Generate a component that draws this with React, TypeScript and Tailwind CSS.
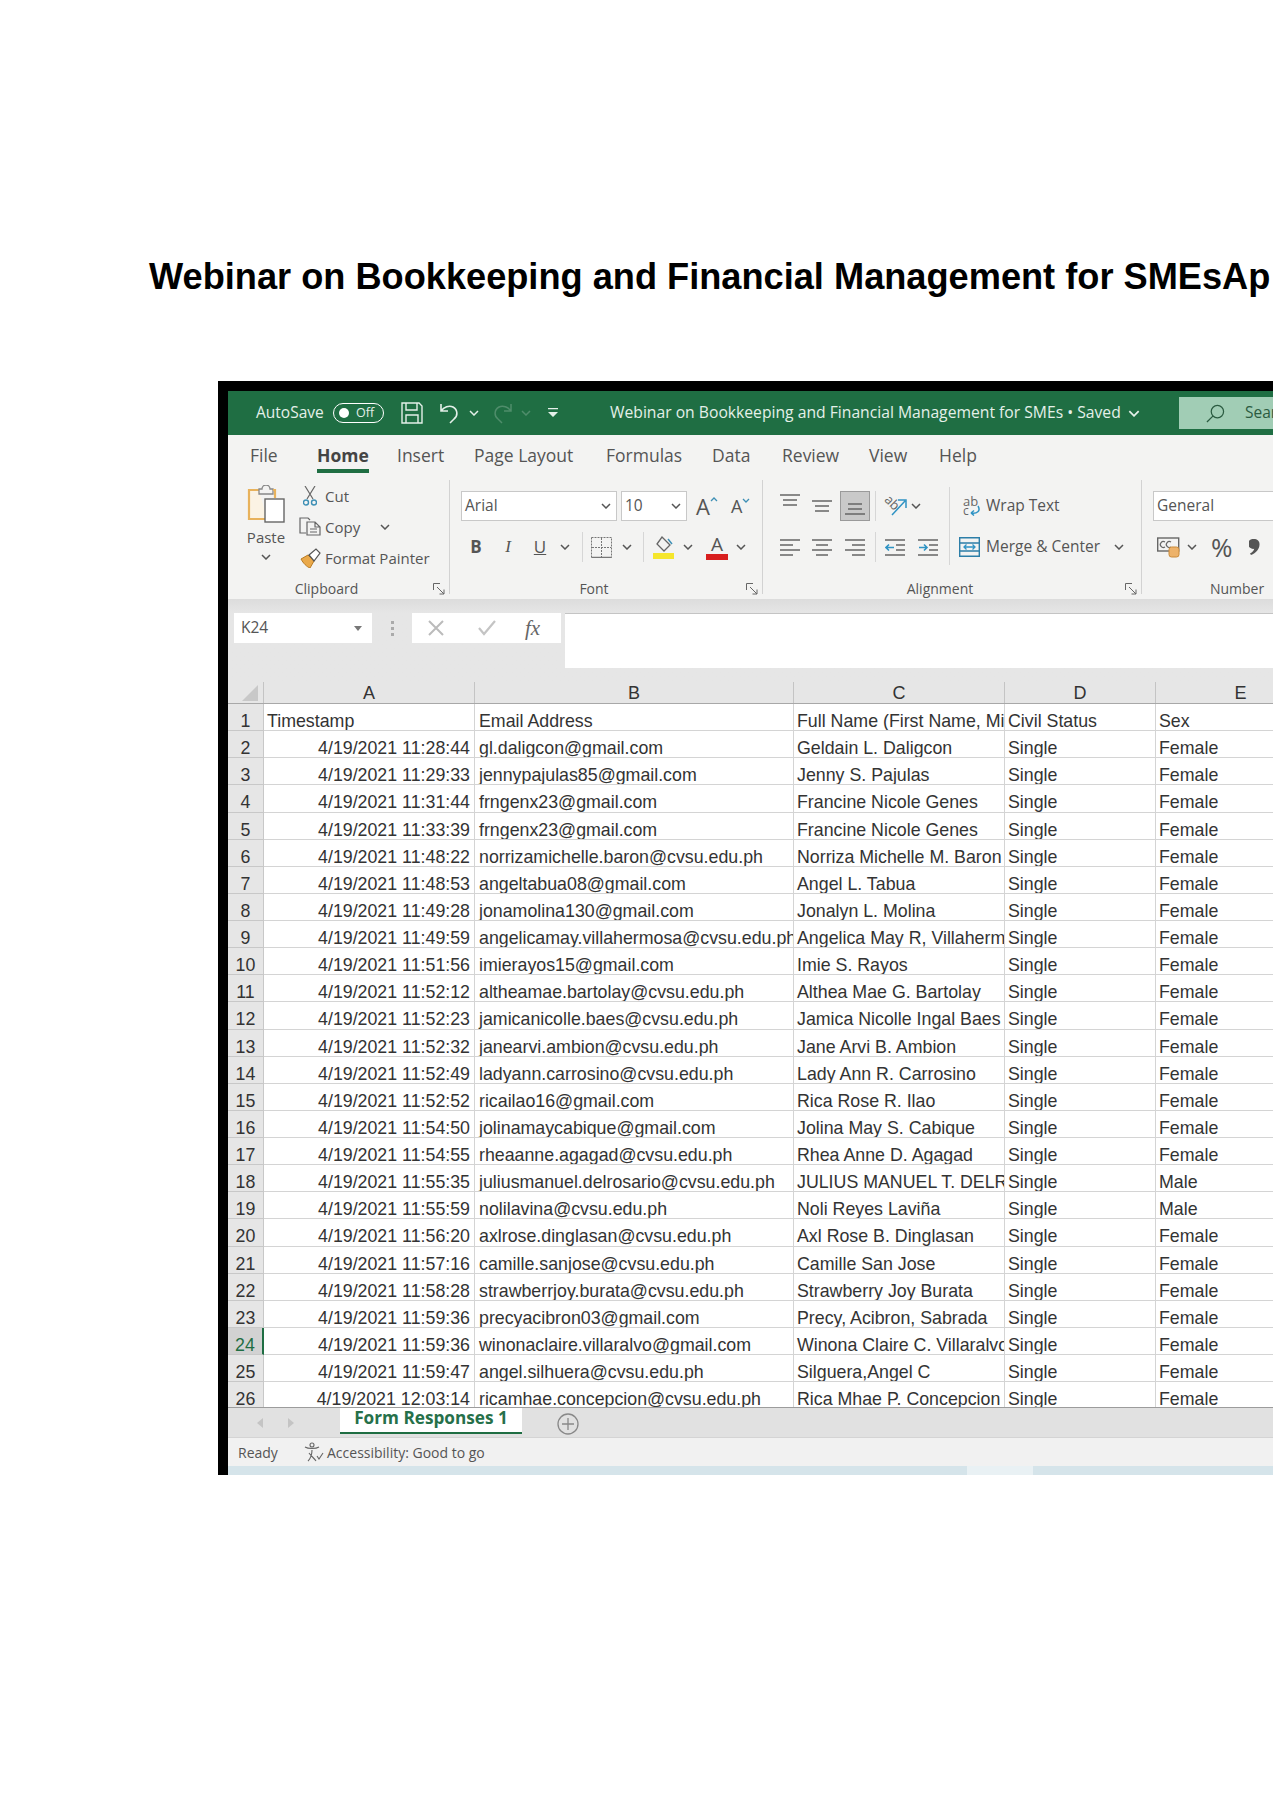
import React from 'react';

const rows = [
  ['Timestamp', 'Email Address', 'Full Name (First Name, Middle Name)', 'Civil Status', 'Sex'],
  ['4/19/2021 11:28:44', 'gl.daligcon@gmail.com', 'Geldain L. Daligcon', 'Single', 'Female'],
  ['4/19/2021 11:29:33', 'jennypajulas85@gmail.com', 'Jenny S. Pajulas', 'Single', 'Female'],
  ['4/19/2021 11:31:44', 'frngenx23@gmail.com', 'Francine Nicole Genes', 'Single', 'Female'],
  ['4/19/2021 11:33:39', 'frngenx23@gmail.com', 'Francine Nicole Genes', 'Single', 'Female'],
  ['4/19/2021 11:48:22', 'norrizamichelle.baron@cvsu.edu.ph', 'Norriza Michelle M. Baron', 'Single', 'Female'],
  ['4/19/2021 11:48:53', 'angeltabua08@gmail.com', 'Angel L. Tabua', 'Single', 'Female'],
  ['4/19/2021 11:49:28', 'jonamolina130@gmail.com', 'Jonalyn L. Molina', 'Single', 'Female'],
  ['4/19/2021 11:49:59', 'angelicamay.villahermosa@cvsu.edu.ph', 'Angelica May R, Villahermosa', 'Single', 'Female'],
  ['4/19/2021 11:51:56', 'imierayos15@gmail.com', 'Imie S. Rayos', 'Single', 'Female'],
  ['4/19/2021 11:52:12', 'altheamae.bartolay@cvsu.edu.ph', 'Althea Mae G. Bartolay', 'Single', 'Female'],
  ['4/19/2021 11:52:23', 'jamicanicolle.baes@cvsu.edu.ph', 'Jamica Nicolle Ingal Baes', 'Single', 'Female'],
  ['4/19/2021 11:52:32', 'janearvi.ambion@cvsu.edu.ph', 'Jane Arvi B. Ambion', 'Single', 'Female'],
  ['4/19/2021 11:52:49', 'ladyann.carrosino@cvsu.edu.ph', 'Lady Ann R. Carrosino', 'Single', 'Female'],
  ['4/19/2021 11:52:52', 'ricailao16@gmail.com', 'Rica Rose R. Ilao', 'Single', 'Female'],
  ['4/19/2021 11:54:50', 'jolinamaycabique@gmail.com', 'Jolina May S. Cabique', 'Single', 'Female'],
  ['4/19/2021 11:54:55', 'rheaanne.agagad@cvsu.edu.ph', 'Rhea Anne D. Agagad', 'Single', 'Female'],
  ['4/19/2021 11:55:35', 'juliusmanuel.delrosario@cvsu.edu.ph', 'JULIUS MANUEL T. DELROSARIO', 'Single', 'Male'],
  ['4/19/2021 11:55:59', 'nolilavina@cvsu.edu.ph', 'Noli Reyes Laviña', 'Single', 'Male'],
  ['4/19/2021 11:56:20', 'axlrose.dinglasan@cvsu.edu.ph', 'Axl Rose B. Dinglasan', 'Single', 'Female'],
  ['4/19/2021 11:57:16', 'camille.sanjose@cvsu.edu.ph', 'Camille San Jose', 'Single', 'Female'],
  ['4/19/2021 11:58:28', 'strawberrjoy.burata@cvsu.edu.ph', 'Strawberry Joy Burata', 'Single', 'Female'],
  ['4/19/2021 11:59:36', 'precyacibron03@gmail.com', 'Precy, Acibron, Sabrada', 'Single', 'Female'],
  ['4/19/2021 11:59:36', 'winonaclaire.villaralvo@gmail.com', 'Winona Claire C. Villaralvo', 'Single', 'Female'],
  ['4/19/2021 11:59:47', 'angel.silhuera@cvsu.edu.ph', 'Silguera,Angel C', 'Single', 'Female'],
  ['4/19/2021 12:03:14', 'ricamhae.concepcion@cvsu.edu.ph', 'Rica Mhae P. Concepcion', 'Single', 'Female'],
];

const tabs = [
  { name: 'File', width: 'w-[67px]' },
  { name: 'Home', width: 'w-[80px]' },
  { name: 'Insert', width: 'w-[77px]' },
  { name: 'Page Layout', width: 'w-[132px]' },
  { name: 'Formulas', width: 'w-[106px]' },
  { name: 'Data', width: 'w-[70px]' },
  { name: 'Review', width: 'w-[87px]' },
  { name: 'View', width: 'w-[70px]' },
  { name: 'Help', width: 'w-[60px]' },
];

const Chev = ({ className = '', color = '#555' }: { className?: string; color?: string }) => (
  <svg viewBox="0 0 10 6" className={`h-[6px] w-[10px] shrink-0 ${className}`} fill="none" stroke={color} strokeWidth="1.5">
    <path d="M1 1l4 4 4-4" />
  </svg>
);

// four horizontal strokes, used by all the align buttons
const Lines = ({ d, className = '' }: { d: string; className?: string }) => (
  <svg viewBox="0 0 20 20" className={`h-[20px] w-[20px] shrink-0 ${className}`} fill="none" stroke="#666" strokeWidth="1.6">
    <path d={d} />
  </svg>
);

const Launcher = () => (
  <svg viewBox="0 0 12 12" className="absolute right-[4px] bottom-[-1px] h-[12px] w-[12px]" fill="none" stroke="#666" strokeWidth="1">
    <path d="M.5 7V.5H7M4 4l7 7M11 6.5V11H6.500" />
  </svg>
);

const Sep = ({ className = '' }: { className?: string }) => <div className={`h-[30px] w-px shrink-0 bg-[#d6d6d6] ${className}`} />;

function GroupLabel({ children }: { children: React.ReactNode }) {
  return <div className="h-[28px] pt-[13px] pr-[24px] text-center text-[14px] leading-[20px] text-[#555]">{children}</div>;
}

function TitleBar() {
  return (
    <div className="flex h-[44px] items-center bg-[#1f6e43] text-[#e4f0e9]">
      <span className="ml-[28px] w-[77px] whitespace-nowrap text-[15.5px]">AutoSave</span>
      <div className="flex h-[20px] w-[51px] shrink-0 items-center rounded-full border-[1.5px] border-white pl-[5px]">
        <div className="h-[10px] w-[10px] rounded-full bg-white" />
        <span className="ml-[7px] text-[12.5px] leading-none">Off</span>
      </div>
      <svg viewBox="0 0 22 22" className="ml-[17px] h-[22px] w-[22px] shrink-0" fill="none" stroke="#e4f0e9" strokeWidth="1.4">
        <path d="M1 1h17l3 3v17H1zM5 1v7h11V1M5 21v-8h12v8" />
      </svg>
      <svg viewBox="0 0 20 22" className="ml-[17px] h-[22px] w-[20px] shrink-0" fill="none" stroke="#e4f0e9" strokeWidth="1.6">
        <path d="M1 2v7h7M1 9c3-4 8-6 12-4 5 3 5 9 1 12l-4 4" />
      </svg>
      <Chev className="ml-[9px]" color="#e4f0e9" />
      <svg viewBox="0 0 20 22" className="ml-[13px] h-[22px] w-[20px] shrink-0" fill="none" stroke="#4f8d6b" strokeWidth="1.5">
        <path d="M19 2v7h-7M19 9c-3-4-8-6-12-4-5 3-5 9-1 12l4 4" />
      </svg>
      <Chev className="ml-[9px]" color="#4f8d6b" />
      <svg viewBox="0 0 10 10" className="ml-[17px] h-[10px] w-[10px] shrink-0" fill="#e4f0e9">
        <path d="M0 0h10v1.300H0zM0 4h10L5 9z" />
      </svg>
      <span className="ml-[52px] w-[512px] whitespace-nowrap text-[15.7px]">Webinar on Bookkeeping and Financial Management for SMEs • Saved</span>
      <Chev className="ml-[6px] h-[7px] w-[12px]" color="#e4f0e9" />
      <div className="ml-[39px] flex h-[32px] w-[120px] shrink-0 items-center bg-[#a1cdb5] pl-[27px] text-[#2b5b41]">
        <svg viewBox="0 0 20 20" className="h-[19px] w-[19px] shrink-0" fill="none" stroke="#2b5b41" strokeWidth="1.3">
          <circle cx="12" cy="8" r="6.500" />
          <path d="M7.500 12.500L1 19" />
        </svg>
        <span className="ml-[20px] text-[15.5px]">Search</span>
      </div>
    </div>
  );
}

function RibbonTabs() {
  return (
    <div className="flex h-[38px] items-center bg-[#f3f3f2] pt-[2px] pl-[22px] text-[17.5px] text-[#555]">
      {tabs.map((t) => (
        <div key={t.name} className={`${t.width} shrink-0 whitespace-nowrap`}>
          {t.name === 'Home' ? (
            <span className="inline-block h-[36px] border-b-[4px] border-[#1f6e43] pt-[6px] leading-[24px] font-bold text-[#444]">Home</span>
          ) : (
            t.name
          )}
        </div>
      ))}
    </div>
  );
}

function Clipboard() {
  return (
    <div className="relative h-[114px] w-[222px] shrink-0 border-r border-[#d2d2d2]">
      <div className="flex h-[86px]">
        <div className="ml-[19px] flex w-[38px] shrink-0 flex-col items-center pt-[5px]">
          <svg viewBox="0 0 38 38" className="h-[38px] w-[38px] shrink-0" fill="none">
            <path d="M12 5H2v29h18" stroke="#e8b25c" strokeWidth="2.200" fill="#fbf3e4" />
            <path d="M12 6V4h3a4 4 0 018 0h3v5H12z" stroke="#888" strokeWidth="1.300" fill="#f3f3f2" />
            <path d="M26 5h2v8" stroke="#e8b25c" strokeWidth="2.200" />
            <rect x="18" y="14" width="19" height="23" fill="#fff" stroke="#666" strokeWidth="1.400" />
          </svg>
          <span className="mt-[4px] text-[15px] leading-[20px] text-[#555]">Paste</span>
          <Chev className="mt-[7px]" />
        </div>
        <div className="ml-[13px] flex flex-col text-[15px] leading-[20px] text-[#555]">
          <div className="flex h-[31px] shrink-0 items-center pl-[5px]">
            <svg viewBox="0 0 14 20" className="h-[20px] w-[14px] shrink-0" fill="none">
              <path d="M2 0l8 13M12 0L4 13" stroke="#666" strokeWidth="1.200" />
              <circle cx="3" cy="16.500" r="2.500" stroke="#3d8fb5" strokeWidth="1.400" />
              <circle cx="11" cy="16.500" r="2.500" stroke="#3d8fb5" strokeWidth="1.400" />
            </svg>
            <span className="ml-[8px]">Cut</span>
          </div>
          <div className="flex h-[31px] shrink-0 items-center pl-[1px]">
            <svg viewBox="0 0 22 19" className="h-[19px] w-[22px] shrink-0" fill="none" stroke="#666" strokeWidth="1.200">
              <path d="M7 16H1V1h8l2 2" />
              <path d="M8 5h8l5 5v8H8zM16 5v5h5M11 12h7M11 15h7" />
            </svg>
            <span className="ml-[4px]">Copy</span>
            <Chev className="ml-[20px]" />
          </div>
          <div className="flex h-[31px] shrink-0 items-center pl-[2px]">
            <svg viewBox="0 0 21 20" className="h-[20px] w-[21px] shrink-0">
              <path d="M1 11l7-4 6 6-4 7c-3-1-7-5-9-9z" fill="#eaa94a" stroke="#b87a22" strokeWidth="1" />
              <path d="M9 7l7-6 4 4-6 8z" fill="#fff" stroke="#555" strokeWidth="1.200" />
            </svg>
            <span className="ml-[4px] whitespace-nowrap">Format Painter</span>
          </div>
        </div>
      </div>
      <GroupLabel>Clipboard</GroupLabel>
      <Launcher />
    </div>
  );
}

function FontGroup() {
  return (
    <div className="relative h-[114px] w-[313px] shrink-0 border-r border-[#d2d2d2]">
      <div className="h-[86px] pt-[11px]">
        <div className="flex h-[30px] items-center">
          <div className="ml-[11px] flex h-[30px] w-[156px] items-center justify-between border border-[#c8c8c8] bg-white pr-[5px] pl-[3px] text-[15.5px] text-[#555]">
            Arial
            <Chev />
          </div>
          <div className="ml-[4px] flex h-[30px] w-[66px] items-center justify-between border border-[#c8c8c8] bg-white pr-[5px] pl-[3px] text-[15.5px] text-[#555]">
            10
            <Chev />
          </div>
          <span className="ml-[9px] flex w-[26px] items-start text-[22px] leading-none text-[#555]">A<svg viewBox="0 0 8 5" className="mt-[2px] h-[5px] w-[8px]" fill="none" stroke="#3d8fb5" strokeWidth="1.300"><path d="M1 4l3-3 3 3" /></svg></span>
          <span className="ml-[9px] flex items-start text-[18px] leading-none text-[#555]">A<svg viewBox="0 0 8 5" className="mt-[1px] h-[5px] w-[8px]" fill="none" stroke="#3d8fb5" strokeWidth="1.300"><path d="M1 1l3 3 3-3" /></svg></span>
        </div>
        <div className="mt-[11px] flex h-[30px] items-center text-[#555]">
          <span className="ml-[18px] w-[16px] text-center text-[17px] font-bold">B</span>
          <span className="ml-[16px] w-[16px] text-center font-['Liberation_Serif',serif] text-[17px] italic">I</span>
          <span className="ml-[16px] w-[16px] text-center text-[17px] underline">U</span>
          <Chev className="ml-[12px]" />
          <Sep className="ml-[12px]" />
          <svg viewBox="0 0 21 21" className="ml-[8px] h-[21px] w-[21px] shrink-0" fill="none" stroke="#777" strokeWidth="1">
            <path d="M.5.500h20v20H.500z" strokeDasharray="2 1" />
            <path d="M10.500 1v19M1 10.500h19" strokeDasharray="2 1" />
            <path d="M.5 20.500h20" strokeWidth="1.500" strokeDasharray="none" />
          </svg>
          <Chev className="ml-[10px]" />
          <Sep className="ml-[11px]" />
          <svg viewBox="0 0 21 23" className="ml-[9px] h-[23px] w-[21px] shrink-0" fill="none">
            <path d="M9 1l8 8-6 6-7-7z" stroke="#666" strokeWidth="1.300" />
            <path d="M15 3l4 5" stroke="#3d8fb5" strokeWidth="1.500" />
            <rect x="0" y="17" width="21" height="6" fill="#f5e62c" />
          </svg>
          <Chev className="ml-[9px]" />
          <div className="ml-[13px] flex h-[25px] w-[22px] shrink-0 flex-col items-center">
            <span className="text-[19px] leading-[19px] text-[#555]">A</span>
            <div className="h-[6px] w-[22px] bg-[#d81e1e]" />
          </div>
          <Chev className="ml-[8px]" />
        </div>
      </div>
      <GroupLabel>Font</GroupLabel>
      <Launcher />
    </div>
  );
}

const lineTop = 'M0 3h20M3 8h14M3 13h14';
const lineMid = 'M0 5h20M3 10h14M3 15h14';
const lineBot = 'M3 8h14M3 13h14M0 18h20';
const lineLeft = 'M0 3h20M0 8h13M0 13h20M0 18h13';
const lineCenter = 'M0 3h20M4 8h12M0 13h20M4 18h12';
const lineRight = 'M0 3h20M7 8h13M0 13h20M7 18h13';

const Indent = ({ flip, className = '' }: { flip?: boolean; className?: string }) => (
  <svg viewBox="0 0 20 20" className={`h-[20px] w-[20px] shrink-0 ${className}`} fill="none" strokeWidth="1.600">
    <path d="M0 3h20M11 8h9M11 13h9M0 18h20" stroke="#666" />
    <path d={flip ? 'M1 10.500h8M6 7.500l3 3-3 3' : 'M9 10.500H1M4 7.500l-3 3 3 3'} stroke="#2f93c4" />
  </svg>
);

function Alignment() {
  return (
    <div className="relative h-[114px] w-[379px] shrink-0 border-r border-[#d2d2d2]">
      <div className="flex h-[86px]">
        <div className="w-[186px] shrink-0 pt-[11px]">
          <div className="flex h-[30px] items-center">
            <Lines d={lineTop} className="mb-[8px] ml-[17px]" />
            <Lines d={lineMid} className="ml-[12px]" />
            <div className="ml-[8px] flex h-[30px] w-[30px] shrink-0 items-center justify-center border border-[#9a9a9a] bg-[#c9c9c9]">
              <Lines d={lineBot} />
            </div>
            <Sep className="ml-[5px]" />
            <svg viewBox="0 0 23 20" className="ml-[8px] h-[20px] w-[23px] shrink-0" fill="none">
              <text x="-1" y="10" transform="rotate(45 6 8)" fontSize="13" fill="#666">ab</text>
              <path d="M8 19L21 5M14 4h8v8" stroke="#2f93c4" strokeWidth="1.500" />
            </svg>
            <Chev className="ml-[4px]" />
          </div>
          <div className="mt-[11px] flex h-[30px] items-center">
            <Lines d={lineLeft} className="ml-[17px]" />
            <Lines d={lineCenter} className="ml-[12px]" />
            <Lines d={lineRight} className="ml-[13px]" />
            <Sep className="ml-[10px]" />
            <Indent className="ml-[9px]" />
            <Indent flip className="ml-[13px]" />
          </div>
        </div>
        <div className="mt-[7px] h-[78px] w-px shrink-0 bg-[#d6d6d6]" />
        <div className="pt-[11px] text-[15.5px] text-[#555]">
          <div className="flex h-[30px] items-center">
            <svg viewBox="0 0 19 20" className="ml-[12px] h-[20px] w-[19px] shrink-0" fill="none">
              <text x="1" y="10" fontSize="13" fill="#666">ab</text>
              <text x="1" y="19" fontSize="12" fill="#666">c</text>
              <path d="M16 10c3 5-1 8-7 7M9 17l3-2.500M9 17l3 2.500" stroke="#2f93c4" strokeWidth="1.500" />
            </svg>
            <span className="ml-[5px] whitespace-nowrap">Wrap Text</span>
          </div>
          <div className="mt-[11px] flex h-[30px] items-center">
            <svg viewBox="0 0 21 20" className="ml-[9px] h-[20px] w-[21px] shrink-0" fill="none">
              <path d="M.7.700h19.600v18.600H.7zM.7 6h19.600M.7 14h19.600" stroke="#2c7ea8" strokeWidth="1.400" />
              <path d="M5 10h11M7.500 7.500L5 10l2.500 2.500M13.500 7.500L16 10l-2.500 2.500" stroke="#2f93c4" strokeWidth="1.300" />
            </svg>
            <span className="ml-[6px] w-[125px] whitespace-nowrap">Merge &amp; Center</span>
            <Chev className="ml-[3px]" />
          </div>
        </div>
      </div>
      <GroupLabel>Alignment</GroupLabel>
      <Launcher />
    </div>
  );
}

function NumberGroup() {
  return (
    <div className="relative h-[114px] w-[200px] shrink-0">
      <div className="h-[86px] pt-[11px]">
        <div className="ml-[11px] flex h-[30px] items-center border border-[#c8c8c8] bg-white pl-[3px] text-[15.5px] text-[#555]">General</div>
        <div className="mt-[11px] flex h-[30px] items-center">
          <svg viewBox="0 0 23 22" className="ml-[15px] h-[22px] w-[23px] shrink-0" fill="none">
            <rect x=".7" y="2" width="21" height="13" stroke="#666" strokeWidth="1.400" />
            <path d="M8 6a3 3 0 100 5M14 6a3 3 0 100 5" stroke="#666" strokeWidth="1.200" />
            <rect x="12" y="11" width="10" height="10" rx="2.500" fill="#edb26a" stroke="#c98a3a" />
          </svg>
          <Chev className="ml-[7px]" />
          <span className="ml-[14px] w-[21px] text-center text-[26px] leading-none text-[#555]">%</span>
          <svg viewBox="0 0 11 16" className="ml-[17px] h-[16px] w-[11px] shrink-0" fill="#555">
            <path d="M5 0a5 5 0 015.500 5.500C10.500 10 7 14 2 16l-1-1.500c2.500-1.200 4-3 4.200-4.700A5 5 0 115 0z" />
          </svg>
        </div>
      </div>
      <div className="w-[147px] pl-[67px]">
        <GroupLabel>Number</GroupLabel>
      </div>
    </div>
  );
}

function FormulaBar() {
  return (
    <div className="flex h-[83px] items-start bg-gradient-to-b from-[#dcdcdc] to-[#e6e6e6] to-[14px] pt-[14px]">
      <div className="ml-[6px] flex h-[30px] w-[138px] shrink-0 items-center justify-between bg-white pr-[10px] pl-[7px] text-[15.5px] text-[#555]">
        K24
        <svg viewBox="0 0 8 5" className="h-[5px] w-[8px]" fill="#777"><path d="M0 0h8L4 5z" /></svg>
      </div>
      <div className="ml-[18px] flex h-[30px] w-[4px] shrink-0 flex-col items-center justify-center gap-[3px]">
        <div className="h-[3px] w-[3px] bg-[#aaa]" />
        <div className="h-[3px] w-[3px] bg-[#aaa]" />
        <div className="h-[3px] w-[3px] bg-[#aaa]" />
      </div>
      <div className="ml-[18px] flex h-[30px] w-[149px] shrink-0 items-center bg-white">
        <svg viewBox="0 0 16 16" className="ml-[16px] h-[16px] w-[16px]" fill="none" stroke="#bbb" strokeWidth="2"><path d="M1 1l14 14M15 1L1 15" /></svg>
        <svg viewBox="0 0 18 16" className="ml-[34px] h-[16px] w-[18px]" fill="none" stroke="#c4c4c4" strokeWidth="2.200"><path d="M1 8l5 6L17 1" /></svg>
        <span className="ml-[29px] font-['Liberation_Serif',serif] text-[21px] leading-none text-[#666] italic">fx</span>
      </div>
      <div className="ml-[4px] h-[55px] flex-1 border-t border-[#c4c4c4] bg-white" />
    </div>
  );
}

function ColumnHeaders() {
  const cols = [
    { label: 'A', width: 'w-[211px]' },
    { label: 'B', width: 'w-[319px]' },
    { label: 'C', width: 'w-[211px]' },
    { label: 'D', width: 'w-[151px]' },
    { label: 'E', width: 'w-[170px]' },
  ];
  return (
    <div className="flex h-[22px] border-b border-[#a8a8a8] bg-[#e6e6e6] font-['Liberation_Sans',Arial,sans-serif] text-[18px] leading-[22px] text-[#333]">
      <div className="flex w-[36px] shrink-0 items-end justify-end border-r border-[#c4c4c4] pr-[5px] pb-[2px]">
        <svg viewBox="0 0 16 16" className="h-[16px] w-[16px]" fill="#c8c8c8"><path d="M16 0v16H0z" /></svg>
      </div>
      {cols.map((c) => (
        <div key={c.label} className={`${c.width} shrink-0 border-r border-[#c4c4c4] text-center`}>{c.label}</div>
      ))}
    </div>
  );
}

function Sheet() {
  return (
    <div className="h-[703px] overflow-hidden bg-white font-['Liberation_Sans',Arial,sans-serif] text-[17.8px] text-[#333]">
      {rows.map((row, i) => {
        const active = i === 23;
        return (
          <div key={i} className="flex h-[27.14px] leading-[26px]">
            <div className={`w-[36px] shrink-0 overflow-hidden border-r border-b pt-[4px] text-center ${active ? 'border-r-2 border-r-[#1f6e43] border-b-[#c8c8c8] bg-[#d2d2d2] text-[#1f6e43]' : 'border-[#c8c8c8] bg-[#e6e6e6]'}`}>
              {i + 1}
            </div>
            <div className={`w-[211px] shrink-0 overflow-hidden border-r border-b border-[#d4d4d4] pt-[4px] pr-[4px] whitespace-nowrap ${i === 0 ? 'pl-[3px]' : 'text-right'}`}>{row[0]}</div>
            <div className="w-[319px] shrink-0 overflow-hidden border-r border-b border-[#d4d4d4] pt-[4px] pl-[4px] whitespace-nowrap">{row[1]}</div>
            <div className="w-[211px] shrink-0 overflow-hidden border-r border-b border-[#d4d4d4] pt-[4px] pl-[3px] whitespace-nowrap">{row[2]}</div>
            <div className="w-[151px] shrink-0 overflow-hidden border-r border-b border-[#d4d4d4] pt-[4px] pl-[3px] whitespace-nowrap">{row[3]}</div>
            <div className="w-[170px] shrink-0 overflow-hidden border-r border-b border-[#d4d4d4] pt-[4px] pl-[3px] whitespace-nowrap">{row[4]}</div>
          </div>
        );
      })}
    </div>
  );
}

function SheetTabs() {
  return (
    <div className="flex h-[30px] items-start border-t border-[#9c9c9c] bg-[#e1e1e1]">
      <div className="flex h-[30px] items-center">
        <svg viewBox="0 0 6 10" className="ml-[29px] h-[10px] w-[6px]" fill="#c4c4c4"><path d="M6 0v10L0 5z" /></svg>
        <svg viewBox="0 0 6 10" className="ml-[25px] h-[10px] w-[6px]" fill="#c4c4c4"><path d="M0 0v10l6-5z" /></svg>
      </div>
      <div className="ml-[46px] h-[26px] w-[182px] shrink-0 border-b-2 border-[#1f6e43] bg-white text-center text-[17.2px] leading-[20px] font-bold text-[#26704a]">
        Form Responses 1
      </div>
      <svg viewBox="0 0 22 22" className="mt-[5px] ml-[35px] h-[22px] w-[22px] shrink-0" fill="none" stroke="#888" strokeWidth="1.300">
        <circle cx="11" cy="11" r="10" />
        <path d="M11 5v12M5 11h12" />
      </svg>
    </div>
  );
}

function StatusBar() {
  return (
    <div className="flex h-[29px] items-center border-t border-[#d4d4d4] bg-[#f1f1f1] text-[14px] text-[#555]">
      <span className="ml-[10px] w-[66px]">Ready</span>
      <svg viewBox="0 0 20 20" className="h-[20px] w-[20px] shrink-0" fill="none" stroke="#666" strokeWidth="1.100">
        <circle cx="8" cy="3" r="2" />
        <path d="M1 5c3 2 11 2 14 0M8 8c0 4-1 8-4 11M5 11c2 3 5 5 7 8M13 14l2 3 4-6" />
      </svg>
      <span className="ml-[3px] whitespace-nowrap">Accessibility: Good to go</span>
    </div>
  );
}

export default function App() {
  return (
    <div className="h-[1800px] w-[1273px] overflow-hidden bg-white font-['Liberation_Sans',Arial,sans-serif]">
      <h1 className="pt-[254px] pl-[149px] text-[36.2px] leading-[46px] font-bold whitespace-nowrap text-black">
        Webinar on Bookkeeping and Financial Management for SMEsAp
      </h1>
      <div className="mt-[81px] ml-[218px] w-[1100px] border-t-[10px] border-l-[10px] border-black font-['Open_Sans',sans-serif]">
        <TitleBar />
        <RibbonTabs />
        <div className="flex h-[126px] items-start bg-[#f3f3f2] pt-[7px]">
          <Clipboard />
          <FontGroup />
          <Alignment />
          <NumberGroup />
        </div>
        <FormulaBar />
        <ColumnHeaders />
        <Sheet />
        <SheetTabs />
        <StatusBar />
        <div className="flex h-[9px] bg-[#d5e4ea]">
          <div className="ml-[739px] w-[66px] bg-[#e9f1f4]" />
        </div>
      </div>
    </div>
  );
}
